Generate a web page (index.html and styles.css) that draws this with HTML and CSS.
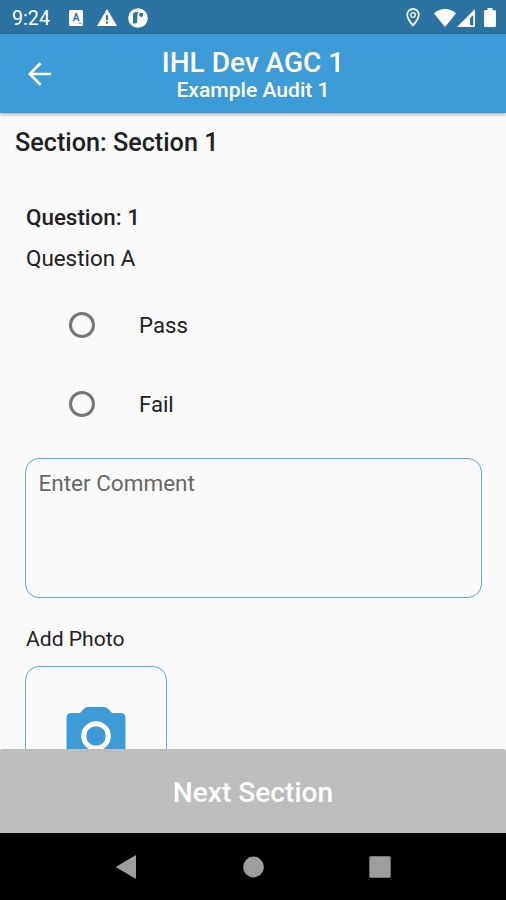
FILE: index.html
```html
<!DOCTYPE html>
<html lang="en">
<head>
<meta charset="utf-8">
<title>Example Audit 1</title>
<link rel="stylesheet" href="styles.css">
</head>
<body>
<div class="screen">
  <div class="status">
    <span class="clock">9:24</span>
    <svg class="keyboard" width="14" height="16" viewBox="0 0 14 16"><rect width="14" height="16" rx="1.5" fill="#fff"/><text x="7" y="11.3" text-anchor="middle" class="key-letter">A</text><path d="M9.5 13.3h3" stroke="#2b73a1" stroke-width=".7"/></svg>
    <svg class="warning" width="20" height="17" viewBox="0 0 20 17"><path d="M10 0 20 17H0Z" fill="#fff"/><path d="M10 6v5M10 12.6v2.1" stroke="#2b73a1" stroke-width="2"/></svg>
    <svg class="app" width="20" height="20" viewBox="0 0 20 20"><circle cx="10" cy="10" r="9.8" fill="#fff"/><path d="M11 4.2H7.5Q5 4.2 5 6.7V15.5H6.8Q9.3 15.5 9.3 13V7.5Q9.3 5.5 11 4.2Z" fill="#2b73a1"/><circle cx="13.2" cy="6.8" r="2.1" fill="#2b73a1"/></svg>
    <svg class="pin" width="14" height="19" viewBox="0 0 14 19"><path d="M7 1a5.8 5.8 0 0 0-5.8 5.8C1.2 11 7 17.3 7 17.3S12.8 11 12.8 6.8A5.8 5.8 0 0 0 7 1Z" fill="none" stroke="#fff" stroke-width="1.8"/><circle cx="7" cy="7" r="2.3" fill="none" stroke="#fff" stroke-width="1.3"/></svg>
    <svg class="wifi" width="22" height="18" viewBox="0 0 22 18"><path d="M11 18 0 4.5Q4.5 0 11 0T22 4.5Z" fill="#fff"/></svg>
    <svg class="signal" width="18" height="18" viewBox="0 0 18 18"><path fill-rule="evenodd" d="M18 0V18H0ZM16.3 6 13 9.3V16.3H16.3Z" fill="#fff"/></svg>
    <svg class="battery" width="12" height="19" viewBox="0 0 12 19"><path d="M3.5 0h5v2h2Q12 2 12 3.5v14Q12 19 10.5 19h-9Q0 19 0 17.5v-14Q0 2 1.5 2h2Z" fill="#fff"/></svg>
  </div>
  <header class="appbar">
    <svg class="back" width="24" height="24" viewBox="0 0 24 24"><path d="M12.5 1.2 1.8 12 12.5 22.8M2 12H23.2" fill="none" stroke="#fff" stroke-width="2.7"/></svg>
    <div class="titles">
      <div class="title">IHL Dev AGC 1</div>
      <div class="subtitle">Example Audit 1</div>
    </div>
  </header>
  <main class="content">
    <h1 class="section">Section: Section 1</h1>
    <div class="question">
      <h2 class="number">Question: 1</h2>
      <div class="prompt">Question A</div>
      <div class="option"><i class="radio"></i><span>Pass</span></div>
      <div class="option"><i class="radio"></i><span>Fail</span></div>
      <div class="comment">Enter Comment</div>
      <div class="photo-label">Add Photo</div>
      <div class="photo">
        <svg width="60" height="54" viewBox="0 0 60 54"><path d="M21.5 0h17q2 0 3.5 1.7l4 4.3h8.500q5 0 5 5v38q0 5-5 5h-49q-5 0-5-5v-38Q.5 6 5.500 6h8.500l4-4.300Q19.500 0 21.500 0Z" fill="#3d9bd8"/><circle cx="30" cy="29" r="12.300" fill="none" stroke="#fff" stroke-width="5"/></svg>
      </div>
    </div>
  </main>
  <div class="next">Next Section</div>
  <nav class="nav">
    <svg width="22" height="24" viewBox="0 0 22 24"><path d="M20.5.8V23.2L1.500 12Z" fill="#9e9e9e" stroke="#9e9e9e" stroke-linejoin="round"/></svg>
    <svg width="22" height="22" viewBox="0 0 22 22"><circle cx="11.5" cy="11" r="10.4" fill="#9e9e9e"/></svg>
    <svg width="22" height="22" viewBox="0 0 22 22"><rect x=".3" y=".3" width="21.4" height="21.4" rx="1.5" fill="#9e9e9e"/></svg>
  </nav>
</div>
</body>
</html>
```
FILE: styles.css
```css
* { box-sizing: border-box; }
body { margin: 0; font-family: Roboto, sans-serif; color: #212121; }
svg { display: block; flex: none; }
.screen { width: 506px; height: 900px; display: flex; flex-direction: column; overflow: hidden; background: #fafafa; }
.status { height: 34px; flex: none; display: flex; align-items: center; padding: 1px 10px 0 12px; background: #2b73a1; color: #fff; }
.clock { width: 57px; padding-top: 2px; font-size: 19.7px; line-height: 34px; }
.key-letter { font: 700 10px Roboto, sans-serif; fill: #2b73a1; }
.keyboard { margin-left: -0.5px; }
.warning { margin-left: 14px; }
.app { margin-left: 11px; }
.pin { margin-left: auto; }
.wifi { margin-left: 14px; }
.signal { margin-left: 1px; }
.battery { margin-left: 9px; }
.appbar { height: 79px; flex: none; display: flex; align-items: center; padding: 0 28px; background: #3d9bd8; color: #fff; box-shadow: 0 1px 4px rgba(0,0,0,.4); z-index: 1; }
.titles { flex: 1; margin-right: 24px; padding-top: 2px; text-align: center; font-weight: 500; white-space: nowrap; }
.title { font-size: 28px; line-height: 31px; }
.subtitle { font-size: 21.1px; line-height: 24px; }
.content { flex: 1; min-height: 0; overflow: hidden; display: flex; flex-direction: column; }
.section { flex: none; margin: 14px 0 0 15px; font-size: 25.2px; line-height: 32px; font-weight: 500; }
.question { padding: 42px 24px 0 25px; display: flex; flex-direction: column; }
.number { margin: 0 0 0 1px; font-size: 22.4px; line-height: 32px; font-weight: 500; }
.prompt { margin: 9px 0 0 1px; font-size: 22.4px; line-height: 32px; }
.prompt + .option { margin-top: 11px; }
.option { height: 79px; display: flex; align-items: center; padding-left: 44px; gap: 44px; font-size: 22.2px; }
.radio { width: 26px; height: 26px; border: 3px solid #757575; border-radius: 50%; }
.comment { height: 140px; margin-top: 15px; padding: 8px 12.5px; border: 1.5px solid #5aa9dd; border-radius: 14px; font-size: 22.5px; line-height: 32px; color: #666; }
.photo-label { margin: 26px 0 0 1px; font-size: 21.1px; line-height: 30px; }
.photo { width: 142px; height: 142px; margin-top: 12px; flex: none; display: flex; justify-content: center; padding-top: 40px; border: 1.5px solid #5aa9dd; border-radius: 14px; }
.next { height: 84px; flex: none; display: flex; align-items: center; justify-content: center; background: #bdbdbd; color: #fff; font-size: 28.1px; font-weight: 500; padding-top: 2px; border-radius: 2px 2px 0 0; }
.nav { height: 67px; flex: none; display: flex; align-items: center; justify-content: space-between; padding: 0 115px; background: #000; }
```
